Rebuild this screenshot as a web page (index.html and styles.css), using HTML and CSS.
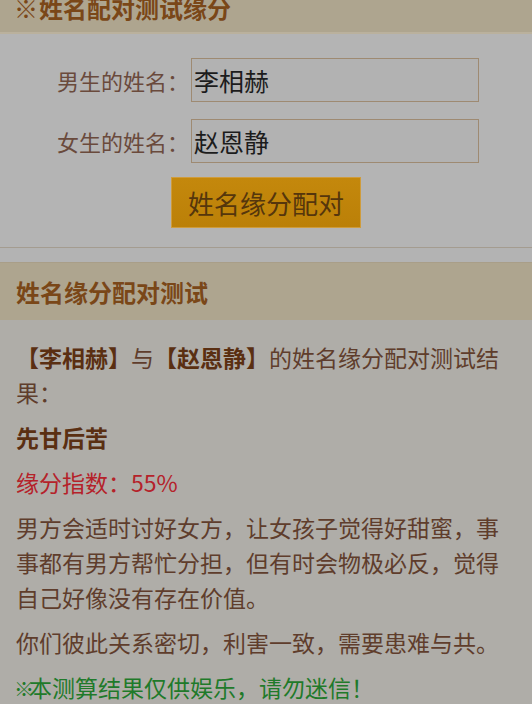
FILE: index.html
```html
<!DOCTYPE html>
<html lang="zh-CN">
<head>
    <meta charset="UTF-8">
    <meta name="viewport" content="width=device-width, initial-scale=1.0">
    <title>姓名配对测试缘分</title>
    <link rel="stylesheet" href="styles.css">
</head>
<body>
    <div class="page">
        <div class="box">
            <h2 class="box-title"><span class="mark">※</span>姓名配对测试缘分</h2>
            <form class="match-form">
                <div class="row">
                    <label class="row-label" for="boy">男生的姓名：</label>
                    <input class="name-input" id="boy" type="text" value="李相赫">
                </div>
                <div class="row">
                    <label class="row-label" for="girl">女生的姓名：</label>
                    <input class="name-input" id="girl" type="text" value="赵恩静">
                </div>
                <button class="match-btn" type="button">姓名缘分配对</button>
            </form>
        </div>

        <div class="box result">
            <h2 class="box-title">姓名缘分配对测试</h2>
            <div class="result-body">
                <p><b>【李相赫】</b>与<b>【赵恩静】</b>的姓名缘分配对测试结果：</p>
                <p class="verdict">先甘后苦</p>
                <p class="score">缘分指数：55%</p>
                <p>男方会适时讨好女方，让女孩子觉得好甜蜜，事事都有男方帮忙分担，但有时会物极必反，觉得自己好像没有存在价值。</p>
                <p>你们彼此关系密切，利害一致，需要患难与共。</p>
                <p class="notice"><span class="mark small">※</span>本测算结果仅供娱乐，请勿迷信！</p>
            </div>
        </div>
    </div>
</body>
</html>
```

FILE: styles.css
```css
body {
    margin: 0;
    background-color: #b3b3b3;
    font-family: "Noto Sans CJK SC", "Noto Sans", sans-serif;
    color: #5f3d2c;
    font-size: 23px;
    text-spacing-trim: space-all;
}

.page {
    margin-top: -16px; /* page is scrolled a little */
}

.box {
    background-color: #b4b4b4;
    border-bottom: 1px solid #a49c90;
    margin-bottom: 14px;
}

.box-title {
    margin: 0;
    height: 48px;
    line-height: 48px;
    padding: 0 16px;
    font-size: 24px;
    font-weight: bold;
    color: #7a4718;
    background-color: #aea58f;
    border-bottom: 2px solid #bab19d;
}

.mark {
    display: inline-block;
    font-size: 24px;
    margin-left: -2px;
    margin-right: 1px;
    line-height: 1;
    vertical-align: 0;
}

.mark.small {
    font-size: 20px;
    margin-left: -2px;
    margin-right: -5px;
}

.match-form {
    display: flex;
    flex-direction: column;
    align-items: center;
    padding: 24px 0 19px;
}

.row {
    display: flex;
    align-items: center;
    margin-bottom: 17px;
    padding-left: 4px;
}

.row-label {
    font-size: 22px;
    color: #6a4a3c;
    margin-right: 2px;
}

.name-input {
    box-sizing: border-box;
    width: 288px;
    height: 44px;
    padding: 0 2px;
    font-family: "Noto Sans CJK SC", sans-serif;
    font-size: 25px;
    color: #1c1c1c;
    background-color: #b2b2b2;
    border: 1px solid #9e8a72;
    outline: none;
}

.match-btn {
    margin-top: -3px;
    width: 190px;
    height: 51px;
    font-family: "Noto Sans CJK SC", sans-serif;
    font-size: 26px;
    color: #55360c;
    background: linear-gradient(#c4880c, #bb8008);
    border: 1px solid #cf9c3c;
    cursor: pointer;
}

.result {
    background-color: #afada8;
    border-top: 1px solid #a99e88;
    border-bottom: none;
    margin-bottom: 0;
}

.result .box-title {
    height: 57px;
    line-height: 57px;
    border-bottom: none;
}

.result-body {
    padding: 10px 16px;
}

.result-body p {
    margin: 10px 0;
    line-height: 35px;
}

.result-body b,
.verdict {
    font-weight: bold;
    color: #5a2f12;
}

.score {
    color: #b5222a;
}

.notice {
    color: #1f7a2a;
}
```
